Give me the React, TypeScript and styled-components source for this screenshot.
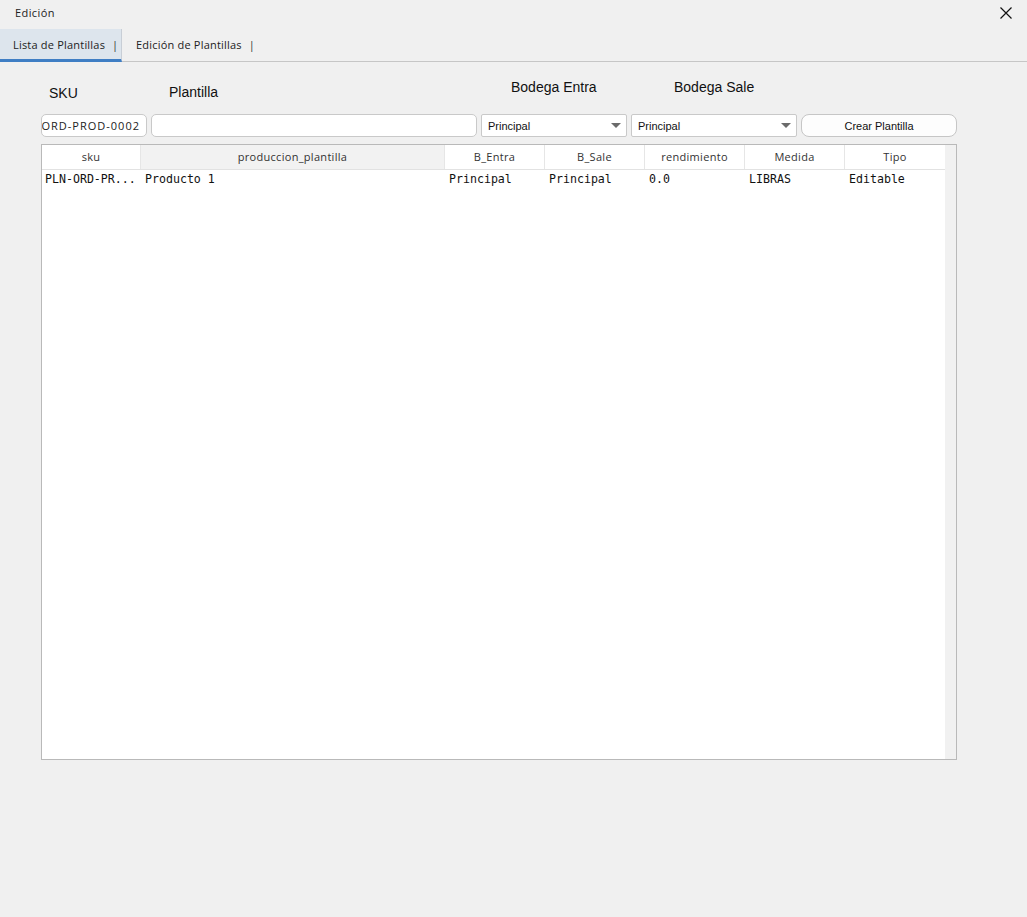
import React from "react";
import styled, { createGlobalStyle } from "styled-components";

const GlobalStyle = createGlobalStyle`
  html, body { margin: 0; padding: 0; background: #f0f0f0; }
  body { font-family: "Open Sans", Arial, sans-serif; }
  * { box-sizing: border-box; }
`;

const UI = `"Open Sans", "Liberation Sans", sans-serif`;
const ARIAL = `"Liberation Sans", Arial, sans-serif`;
const MONO = `"DejaVu Sans Mono", "Liberation Mono", monospace`;

const Window = styled.div`
  width: 1027px;
  height: 917px;
  background: #f0f0f0;
  display: flex;
  flex-direction: column;
`;

const TitleBar = styled.div`
  height: 29px;
  display: flex;
  align-items: center;
  justify-content: space-between;
  padding: 0 14px 4px 15px;
`;

const Title = styled.span`
  font-family: ${UI};
  font-size: 11px;
  letter-spacing: 0.4px;
  color: #222;
`;

const CloseButton = styled.button`
  border: 0;
  background: transparent;
  padding: 0;
  width: 14px;
  height: 14px;
  display: flex;
  align-items: center;
  justify-content: center;
  cursor: pointer;
`;

const TabBar = styled.div`
  height: 33px;
  display: flex;
  border-bottom: 1px solid #c6c6c6;
`;

const Tab = styled.div<{ $active?: boolean }>`
  display: flex;
  align-items: center;
  white-space: nowrap;
  padding-left: ${(p) => (p.$active ? "13px" : "14px")};
  width: ${(p) => (p.$active ? "122px" : "auto")};
  background: ${(p) => (p.$active ? "#dde5ed" : "transparent")};
  border-bottom: ${(p) => (p.$active ? "3px solid #3f7ec4" : "3px solid transparent")};
  border-right: ${(p) => (p.$active ? "1px solid #c8ced6" : "0")};
  margin-bottom: -1px;
  font-family: ${UI};
  font-size: 11px;
  letter-spacing: 0.2px;
  color: #222;
`;

const Sep = styled.span`
  margin-left: 7px;
  color: #333;
`;

const Content = styled.div`
  padding: 0 70px 0 41px;
`;

const FormGrid = styled.div`
  display: grid;
  grid-template-columns: 106px 326px 146px 166px 156px;
  grid-template-rows: 52px 23px;
  column-gap: 4px;
`;

const Label = styled.div<{ $dx: number; $dy: number }>`
  font-family: ${ARIAL};
  font-size: 14px;
  line-height: 16px;
  color: #111;
  padding-left: ${(p) => p.$dx}px;
  padding-top: ${(p) => p.$dy}px;
`;

const TextBox = styled.div`
  height: 23px;
  background: #fff;
  border: 1px solid #c9c9c9;
  border-radius: 5px;
  display: flex;
  align-items: center;
  justify-content: flex-end;
  overflow: hidden;
  white-space: nowrap;
  padding: 0 6px 0 0;
  font-family: ${UI};
  font-size: 11px;
  letter-spacing: 1px;
  color: #222;
`;

const Select = styled.div`
  height: 23px;
  background: #fff;
  border: 1px solid #c9c9c9;
  border-radius: 2px;
  display: flex;
  align-items: center;
  justify-content: space-between;
  padding: 0 5px 0 6px;
  font-family: ${ARIAL};
  font-size: 11px;
  color: #111;
`;

const Arrow = styled.span`
  width: 0;
  height: 0;
  border-left: 5px solid transparent;
  border-right: 5px solid transparent;
  border-top: 5px solid #6b6b6b;
`;

const Button = styled.button`
  height: 23px;
  background: #fdfdfd;
  border: 1px solid #c6c6c6;
  border-radius: 8px;
  font-family: ${ARIAL};
  font-size: 11px;
  color: #111;
  padding: 0;
`;

const Table = styled.div`
  margin-top: 7px;
  width: 916px;
  height: 616px;
  border: 1px solid #b9b9b9;
  background: #fff;
  display: flex;
`;

const TableMain = styled.div`
  flex: 1;
  display: flex;
  flex-direction: column;
`;

const ScrollTrack = styled.div`
  width: 11px;
  background: #f1f1f1;
`;

const Row = styled.div<{ $header?: boolean }>`
  display: grid;
  grid-template-columns: 99px 304px 100px 100px 100px 100px 100px;
  height: ${(p) => (p.$header ? "25px" : "19px")};
  border-bottom: ${(p) => (p.$header ? "1px solid #e2e2e2" : "0")};
`;

const HeadCell = styled.div<{ $highlight?: boolean }>`
  display: flex;
  align-items: center;
  justify-content: center;
  padding-bottom: 1px;
  font-family: ${UI};
  font-size: 11px;
  letter-spacing: 0.3px;
  color: #333;
  background: ${(p) => (p.$highlight ? "#f2f2f2" : "#fff")};
  border-right: 1px solid #e6e6e6;
  &:last-child { border-right: 0; }
`;

const Cell = styled.div<{ $pad?: number }>`
  display: flex;
  align-items: center;
  padding-left: ${(p) => p.$pad ?? 4}px;
  padding-bottom: 2px;
  font-family: ${MONO};
  font-size: 11.6px;
  color: #111;
  white-space: nowrap;
  overflow: hidden;
`;

const columns = [
  "sku",
  "produccion_plantilla",
  "B_Entra",
  "B_Sale",
  "rendimiento",
  "Medida",
  "Tipo",
];

const rows = [
  ["PLN-ORD-PR...", "Producto 1", "Principal", "Principal", "0.0", "LIBRAS", "Editable"],
];

export default function App() {
  return (
    <>
      <GlobalStyle />
      <Window>
        <TitleBar>
          <Title>Edición</Title>
          <CloseButton aria-label="Cerrar">
            <svg width="12" height="12" viewBox="0 0 12 12">
              <path d="M0.5 0.5 L11.5 11.5 M11.5 0.5 L0.5 11.5" stroke="#111" strokeWidth="1.2" fill="none" />
            </svg>
          </CloseButton>
        </TitleBar>
        <TabBar>
          <Tab $active>
            Lista de Plantillas<Sep>|</Sep>
          </Tab>
          <Tab>
            Edición de Plantillas<Sep>|</Sep>
          </Tab>
        </TabBar>
        <Content>
          <FormGrid>
            <Label $dx={8} $dy={23}>SKU</Label>
            <Label $dx={18} $dy={22}>Plantilla</Label>
            <Label $dx={30} $dy={17}>Bodega Entra</Label>
            <Label $dx={43} $dy={17}>Bodega Sale</Label>
            <div />
            <TextBox>PLN-ORD-PROD-0002</TextBox>
            <TextBox />
            <Select>
              Principal
              <Arrow />
            </Select>
            <Select>
              Principal
              <Arrow />
            </Select>
            <Button>Crear Plantilla</Button>
          </FormGrid>
          <Table>
            <TableMain>
              <Row $header>
                {columns.map((c) => (
                  <HeadCell key={c} $highlight={c === "produccion_plantilla"}>
                    {c}
                  </HeadCell>
                ))}
              </Row>
              {rows.map((r, i) => (
                <Row key={i}>
                  {r.map((v, j) => (
                    <Cell key={j} $pad={j === 0 ? 3 : 4}>
                      {v}
                    </Cell>
                  ))}
                </Row>
              ))}
            </TableMain>
            <ScrollTrack />
          </Table>
        </Content>
      </Window>
    </>
  );
}
